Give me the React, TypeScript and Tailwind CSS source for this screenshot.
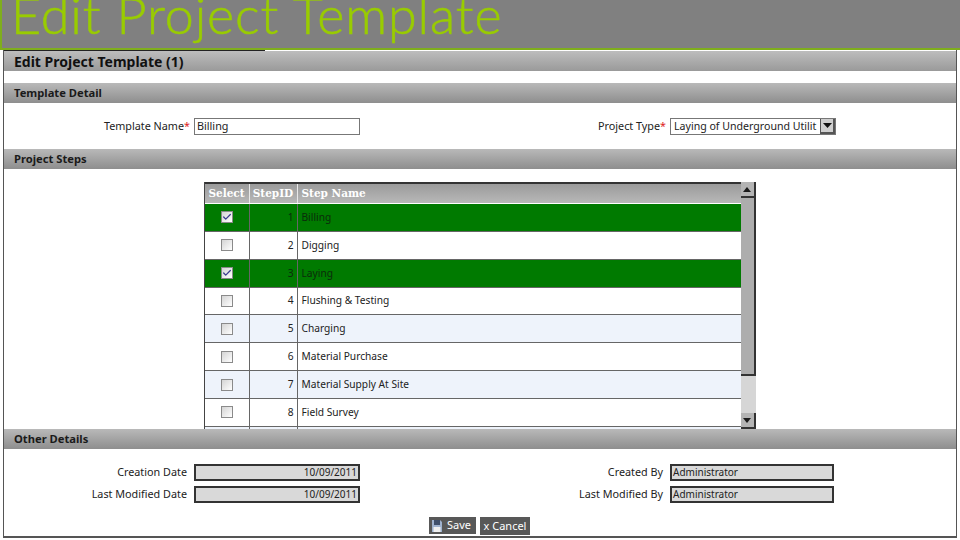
import { Check } from 'lucide-react';

const font = "font-['Noto_Sans','Open_Sans',sans-serif]";

const steps = [
    { id: 1, name: 'Billing', selected: true },
    { id: 2, name: 'Digging' },
    { id: 3, name: 'Laying', selected: true },
    { id: 4, name: 'Flushing & Testing' },
    { id: 5, name: 'Charging', alt: true },
    { id: 6, name: 'Material Purchase' },
    { id: 7, name: 'Material Supply At Site', alt: true },
    { id: 8, name: 'Field Survey' },
];

const SectionBar = ({ title }: { title: string }) => (
    <div className="flex h-[20px] shrink-0 items-center bg-linear-to-b from-[#b9b9b9] to-[#8e8e8e] pl-[10px] text-[11.2px] font-bold text-[#1a1a1a]">
        {title}
    </div>
);

const Checkbox = ({ checked }: { checked?: boolean }) => (
    <div className="flex h-[12px] w-[12px] items-center justify-center border border-[#8a8a8a] bg-linear-to-br from-[#d4d4d4] to-[#ffffff]">
        {checked ? <Check size={10} strokeWidth={3} className="text-[#3b3b8f]" /> : null}
    </div>
);

const ReadOnlyField = ({ value, right, width }: { value: string; right?: boolean; width: string }) => (
    <div className={`flex h-[17px] items-center border-2 border-[#333333] bg-[#d9d9d9] px-[1px] text-[10px] text-[#222222] ${width} ${right ? 'justify-end' : ''}`}>
        {value}
    </div>
);

const ScrollArrow = ({ down }: { down?: boolean }) => (
    <div className="flex h-[16px] shrink-0 items-center justify-center border-r-2 border-b-2 border-[#333333] bg-[#b4b4b4]">
        <svg width="8" height="5" viewBox="0 0 8 5">
            <path d={down ? 'M0 0h8L4 5z' : 'M0 5h8L4 0z'} fill="#1a1a1a" />
        </svg>
    </div>
);

export default function App() {
    return (
        <div className={`flex h-[540px] w-[960px] flex-col overflow-hidden bg-white ${font}`}>
            <div className="h-[50px] shrink-0 overflow-hidden border-b-2 border-l-2 border-[#7fae1c] bg-[#808080] pl-[9px]">
                <div className="-mt-[17px] font-['Lato',sans-serif] text-[52px] leading-[62px] font-light tracking-[0.9px] whitespace-nowrap text-[#99cc00] [-webkit-text-stroke:0.6px_#99cc00]">
                    Edit Project Template
                </div>
            </div>

            <div className="ml-[3px] mb-[2px] flex w-[954px] flex-1 flex-col overflow-hidden border-r border-b-2 border-l border-[#555555]">
                <div className="h-[1px] w-[261px] shrink-0 bg-[#222222]" />
                <div className="flex h-[20px] shrink-0 items-center bg-linear-to-b from-[#bdbdbd] to-[#9a9a9a] pl-[10px] text-[14px] font-bold text-[#111111]">
                    Edit Project Template (1)
                </div>
                <div className="h-[12px] shrink-0" />
                <SectionBar title="Template Detail" />

                <div className="flex h-[46px] shrink-0 items-center text-[10.8px] text-[#222222]">
                    <div className="flex w-[587px] items-center">
                        <div className="w-[186px] pt-[1px] text-right">
                            Template Name<span className="text-[#d22]">*</span>
                        </div>
                        <div className="ml-[4px] flex h-[17px] w-[166px] items-center border border-[#777777] px-[2px] pt-[1px]">
                            Billing
                        </div>
                    </div>
                    <div className="flex items-center">
                        <div className="w-[75px] pt-[1px] text-right">
                            Project Type<span className="text-[#d22]">*</span>
                        </div>
                        <div className="ml-[4px] flex h-[17px] w-[166px] items-center border border-[#777777] text-[10.6px]">
                            <div className="flex-1 overflow-hidden pt-[1px] pl-[3px] whitespace-nowrap">
                                Laying of Underground Utilit
                            </div>
                            <div className="flex h-full w-[15px] shrink-0 items-center justify-center border-r-2 border-b-2 border-l border-[#555555] bg-[#cfcfcf]">
                                <svg width="9" height="5" viewBox="0 0 9 5">
                                    <path d="M0 0h9L4.5 5z" fill="#111111" />
                                </svg>
                            </div>
                        </div>
                    </div>
                </div>

                <SectionBar title="Project Steps" />

                <div className="flex h-[260px] shrink-0 justify-center overflow-hidden pt-[13px] pr-[1px] text-[10.2px] text-[#222222]">
                    <div className="flex h-[247px] w-[552px]">
                        <div className="w-[537px] border-l border-[#444444]">
                            <div className="flex h-[22px] items-center border-t-2 border-b border-t-[#333333] border-b-white bg-linear-to-b from-[#9b9b9b] to-[#b8b8b8] font-['DejaVu_Serif',serif] text-[10.5px] font-bold text-white">
                                <div className="w-[44px] text-center">Select</div>
                                <div className="h-full w-[49px] border-x border-[#e8e8e8] text-center leading-[19px]">StepID</div>
                                <div className="pl-[4px]">Step Name</div>
                            </div>
                            {steps.map((step) => (
                                <div
                                    key={step.id}
                                    className={`flex h-[27.86px] items-center border-b border-[#666666] ${
                                        step.selected ? 'bg-[#007a00] text-[#0b2c0b]' : step.alt ? 'bg-[#eef3fb]' : 'bg-white'
                                    }`}
                                >
                                    <div className="flex h-full w-[44px] items-center justify-center">
                                        <Checkbox checked={step.selected} />
                                    </div>
                                    <div className="flex h-full w-[49px] items-center justify-end border-x border-[#666666] pr-[3px]">
                                        {step.id}
                                    </div>
                                    <div className="pl-[4px]">{step.name}</div>
                                </div>
                            ))}
                            <div className="flex h-[28px] bg-[#eef3fb]">
                                <div className="w-[44px]" />
                                <div className="w-[49px] border-x border-[#666666]" />
                            </div>
                        </div>
                        <div className="flex h-[247px] w-[15px] flex-col">
                            <ScrollArrow />
                            <div className="h-[178px] border-r-2 border-b-2 border-[#333333] bg-[#adadad]" />
                            <div className="flex-1 bg-[#d6d6d6]" />
                            <ScrollArrow down />
                        </div>
                    </div>
                </div>

                <SectionBar title="Other Details" />

                <div className="flex flex-col gap-[5px] pt-[15px] text-[10.8px] text-[#222222]">
                    <div className="flex items-center">
                        <div className="w-[183px] text-right">Creation Date</div>
                        <div className="ml-[7px]">
                            <ReadOnlyField value="10/09/2011" right width="w-[166px]" />
                        </div>
                        <div className="ml-[206px] w-[97px] text-right">Created By</div>
                        <div className="ml-[7px]">
                            <ReadOnlyField value="Administrator" width="w-[164px]" />
                        </div>
                    </div>
                    <div className="flex items-center">
                        <div className="w-[183px] text-right">Last Modified Date</div>
                        <div className="ml-[7px]">
                            <ReadOnlyField value="10/09/2011" right width="w-[166px]" />
                        </div>
                        <div className="ml-[206px] w-[97px] text-right">Last Modified By</div>
                        <div className="ml-[7px]">
                            <ReadOnlyField value="Administrator" width="w-[164px]" />
                        </div>
                    </div>
                </div>

                <div className="mt-[14px] ml-[425px] flex items-start gap-[4px] text-[11px] text-white">
                    <div className="flex h-[17px] w-[47px] items-center gap-[5px] bg-[#585858] pl-[3px]">
                        <svg width="10" height="12" viewBox="0 0 10 12">
                            <path d="M0 0h8l2 2v10H0z" fill="#9fb2cf" />
                            <rect x="2" y="0" width="6" height="5" fill="#3f4f6b" />
                            <rect x="1.5" y="7" width="7" height="5" fill="#f0f0f0" />
                        </svg>
                        Save
                    </div>
                    <div className="flex h-[18px] w-[50px] items-center justify-center bg-[#585858] pt-[1px]">x Cancel</div>
                </div>
            </div>
        </div>
    );
}
